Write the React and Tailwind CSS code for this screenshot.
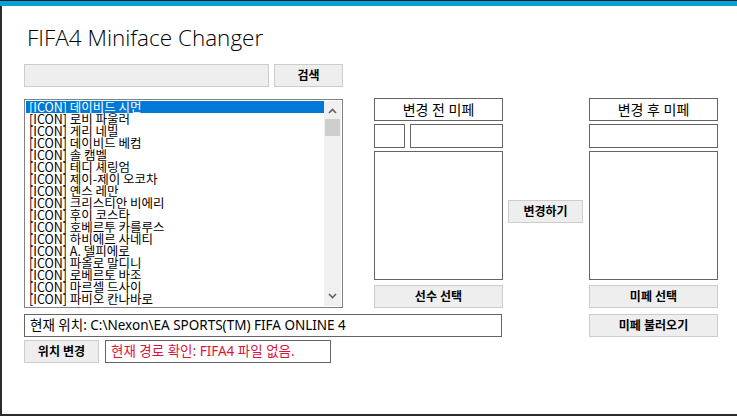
const players = [
  '데이비드 시먼',
  '로비 파울러',
  '게리 네빌',
  '데이비드 베컴',
  '솔 캠벨',
  '테디 셰링엄',
  '제이-제이 오코차',
  '옌스 레만',
  '크리스티안 비에리',
  '후이 코스타',
  '호베르투 카를루스',
  '하비에르 사네티',
  'A. 델피에로',
  '파올로 말디니',
  '로베르토 바조',
  '마르셀 드사이',
  '파비오 칸나바로',
];

const ko = { fontFamily: '"Noto Sans", "Noto Sans CJK KR", sans-serif' };

function Btn({ className = '', children }) {
  return (
    <div
      className={`flex items-center justify-center bg-[#eeeeee] border border-[#cccccc] text-[12px] font-bold text-black leading-none ${className}`}
      style={ko}
    >
      {children}
    </div>
  );
}

function Box({ className = '', children }) {
  return <div className={`border border-[#646464] bg-white ${className}`}>{children}</div>;
}

export default function App() {
  return (
    <div className="w-[737px] h-[416px] bg-white flex flex-col overflow-hidden">
      <div className="h-[1px] bg-[#1c1c1c]" />
      <div className="h-[5px] bg-[#00a3d6]" />
      <div className="flex-1 flex flex-col border-l-2 border-b-2 border-[#2b2b2b] pl-[22px]">
        {/* title */}
        <div
          className="mt-[16px] h-[32px] text-[22.5px] font-light text-black leading-[32px] pl-[3px]"
          style={{ fontFamily: '"Open Sans", sans-serif' }}
        >
          FIFA4 Miniface Changer
        </div>

        {/* search */}
        <div className="mt-[10px] flex gap-[5px]">
          <div className="w-[245px] h-[23px] bg-[#eeeeee] border border-[#cccccc]" />
          <Btn className="w-[69px] h-[23px]">검색</Btn>
        </div>

        {/* main */}
        <div className="mt-[11px] flex">
          <div className="mt-[1px] w-[319px] h-[209px] border border-[#828282] flex p-[1px]">
            <div
              className="flex-1 overflow-hidden text-[12.5px] text-black"
              style={{ fontFamily: '"Noto Sans CJK KR", "DejaVu Sans", sans-serif' }}
            >
              {players.map((p, i) => (
                <div
                  key={p}
                  className={`h-[12px] leading-[12px] pl-[3px] whitespace-nowrap ${
                    i === 0 ? 'bg-[#0078d7] text-white' : ''
                  }`}
                >
                  [ICON] {p}
                </div>
              ))}
            </div>
            <div className="w-[17px] bg-[#f0f0f0] flex flex-col items-center">
              <svg width="9" height="6" viewBox="0 0 9 6" className="mt-[7px]">
                <path d="M1 5 L4.5 1.5 L8 5" stroke="#606060" strokeWidth="1.6" fill="none" />
              </svg>
              <div className="mt-[5px] w-[15px] h-[17px] bg-[#cdcdcd]" />
              <div className="flex-1" />
              <svg width="9" height="6" viewBox="0 0 9 6" className="mb-[7px]">
                <path d="M1 1 L4.5 4.5 L8 1" stroke="#606060" strokeWidth="1.6" fill="none" />
              </svg>
            </div>
          </div>

          {/* before */}
          <div className="ml-[31px] w-[129px] flex flex-col gap-[3px]">
            <Box className="h-[23px] flex items-center justify-center text-[14px] text-black">
              <span style={ko}>변경 전 미페</span>
            </Box>
            <div className="flex gap-[5px]">
              <Box className="w-[31px] h-[24px]" />
              <Box className="flex-1 h-[24px]" />
            </div>
            <Box className="h-[129px]" />
            <Btn className="mt-[2px] h-[23px]">선수 선택</Btn>
          </div>

          {/* middle */}
          <div className="ml-[5px] w-[75px] pt-[102px]">
            <Btn className="h-[23px]">변경하기</Btn>
          </div>

          {/* after */}
          <div className="ml-[6px] w-[129px] flex flex-col gap-[3px]">
            <Box className="h-[23px] flex items-center justify-center text-[14px] text-black">
              <span style={ko}>변경 후 미페</span>
            </Box>
            <Box className="h-[24px]" />
            <Box className="h-[129px]" />
            <Btn className="mt-[2px] h-[23px]">미페 선택</Btn>
          </div>
        </div>

        {/* path */}
        <div className="mt-[6px] flex">
          <Box className="w-[478px] h-[23px] flex items-center pl-[5px] text-[13.5px] text-black whitespace-nowrap">
            <span style={ko}>현재 위치: C:\Nexon\EA SPORTS(TM) FIFA ONLINE 4</span>
          </Box>
          <Btn className="ml-[87px] w-[129px] h-[23px]">미페 불러오기</Btn>
        </div>

        <div className="mt-[3px] flex gap-[6px]">
          <Btn className="w-[75px] h-[23px]">위치 변경</Btn>
          <Box className="w-[226px] h-[23px] flex items-center pl-[5px] text-[13.5px] text-[#dc143c] whitespace-nowrap">
            <span style={ko}>현재 경로 확인: FIFA4 파일 없음.</span>
          </Box>
        </div>
      </div>
    </div>
  );
}
